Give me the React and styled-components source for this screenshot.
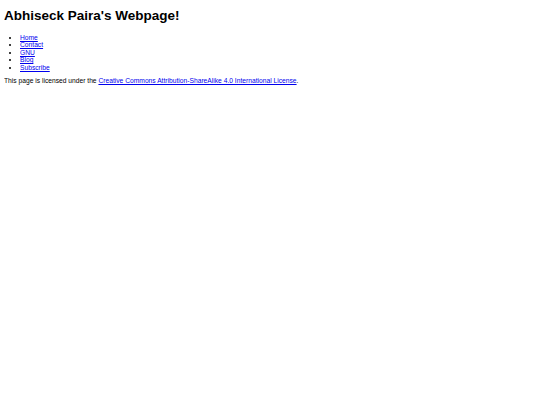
import React from "react";
import styled, { createGlobalStyle } from "styled-components";

const Global = createGlobalStyle`
  html, body { background: #fff; }
  body {
    margin: 4px;
    font-family: "Liberation Sans", Arial, sans-serif;
    font-size: 6.7px;
    color: #000;
  }
`;

const Title = styled.h1`
  font-size: 13.5px;
  line-height: 15.5px;
  font-weight: bold;
  margin: 4px 0 10px;
`;

const Nav = styled.ul`
  margin: 0 0 6px;
  padding-left: 16px;
  list-style: disc;
`;

const Item = styled.li`
  line-height: 7.5px;
`;

const Link = styled.a`
  color: #0000ee;
  text-decoration: underline;
`;

const Note = styled.p`
  margin: 0;
  line-height: 7.7px;
`;

const links = ["Home", "Contact", "GNU", "Blog", "Subscribe"];

export default function App() {
  return (
    <>
      <Global />
      <Title>Abhiseck Paira's Webpage!</Title>
      <Nav>
        {links.map((l) => (
          <Item key={l}>
            <Link href="#">{l}</Link>
          </Item>
        ))}
      </Nav>
      <Note>
        This page is licensed under the{" "}
        <Link href="#">Creative Commons Attribution-ShareAlike 4.0 International License</Link>.
      </Note>
    </>
  );
}
